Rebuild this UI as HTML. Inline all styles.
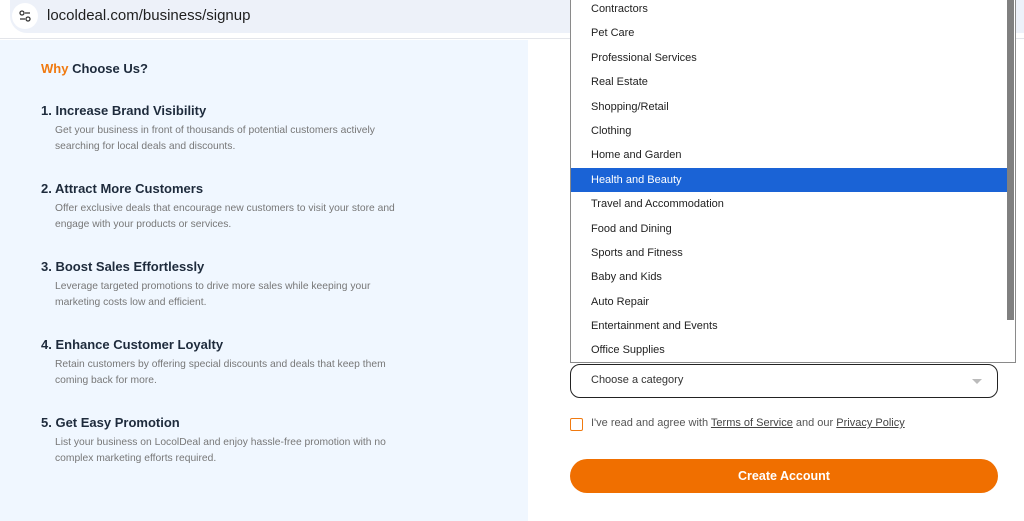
<!DOCTYPE html>
<html><head><style>
*{margin:0;padding:0;box-sizing:border-box}
body{width:1024px;height:521px;overflow:hidden;background:#fff;font-family:"Liberation Sans",sans-serif;position:relative}
.bar{position:absolute;left:0;top:0;width:1024px;height:39px;background:#fff;border-bottom:1px solid #e3e5ea}
.pill{position:absolute;left:10px;top:0;width:1030px;height:33px;background:#edf1f9;border-radius:0 0 0 17px}
.ic{position:absolute;left:12px;top:3px;width:26px;height:26px;border-radius:13px;background:#fff}
.url{position:absolute;left:47px;top:7px;font-size:15px;color:#1f1f1f}
.left{position:absolute;left:0;top:40px;width:528px;height:481px;background:#f0f7ff}
h2{position:absolute;left:41px;top:61px;font-size:13px;font-weight:bold;color:#1e2b3c}
h2 span{color:#f07a10}
.it{position:absolute;left:41px}
.it b{display:block;font-size:13px;color:#1e2b3c;margin-bottom:5px}
.it p{margin-left:14px;font-size:10.3px;line-height:16px;color:#777;width:350px}
.list{position:absolute;left:570px;top:0;width:446px;height:363px;background:#fff;border:1px solid #8a8a8a;border-top:none;overflow:hidden}
.list div{height:24.4px;line-height:24.4px;padding-left:20px;font-size:11px;color:#222;width:436px}
.list .sel{background:#1a63d6;color:#fff}
.thumb{position:absolute;left:1007px;top:0;width:7px;height:320px;background:#808080}
.selbox{position:absolute;left:570px;top:364px;width:428px;height:34px;border:1.5px solid #222;border-radius:10px;font-size:11px;color:#333;padding:9px 0 0 20px}
.arr{position:absolute;right:15px;top:14px;border-left:5px solid transparent;border-right:5px solid transparent;border-top:5px solid #bbb}
.cb{position:absolute;left:570px;top:418px;width:13px;height:13px;border:1.5px solid #f07a10;border-radius:2px}
.agree{position:absolute;left:591px;top:417px;font-size:11px;color:#555}
.agree u{color:#444}
.btn{position:absolute;left:570px;top:459px;width:428px;height:34px;background:#f06f00;border-radius:17px;color:#fff;font-size:12.5px;font-weight:bold;text-align:center;line-height:34px}
</style></head><body>
<div class="bar"><div class="pill"></div><div class="ic"><svg width="26" height="26"><circle cx="10" cy="10" r="2" fill="none" stroke="#333" stroke-width="1.3"/><path d="M13 10h5M8 16h5" stroke="#333" stroke-width="1.3"/><circle cx="16" cy="16" r="2" fill="none" stroke="#333" stroke-width="1.3"/></svg></div><div class="url">locoldeal.com/business/signup</div></div>
<div class="left"></div>
<h2><span>Why</span> Choose Us?</h2>
<div class="it" style="top:103px"><b>1. Increase Brand Visibility</b><p>Get your business in front of thousands of potential customers actively searching for local deals and discounts.</p></div>
<div class="it" style="top:181px"><b>2. Attract More Customers</b><p>Offer exclusive deals that encourage new customers to visit your store and engage with your products or services.</p></div>
<div class="it" style="top:259px"><b>3. Boost Sales Effortlessly</b><p>Leverage targeted promotions to drive more sales while keeping your marketing costs low and efficient.</p></div>
<div class="it" style="top:337px"><b>4. Enhance Customer Loyalty</b><p>Retain customers by offering special discounts and deals that keep them coming back for more.</p></div>
<div class="it" style="top:415px"><b>5. Get Easy Promotion</b><p>List your business on LocolDeal and enjoy hassle-free promotion with no complex marketing efforts required.</p></div>
<div class="list"><div style="margin-top:-3px">Contractors</div><div>Pet Care</div><div>Professional Services</div><div>Real Estate</div><div>Shopping/Retail</div><div>Clothing</div><div>Home and Garden</div><div class="sel">Health and Beauty</div><div>Travel and Accommodation</div><div>Food and Dining</div><div>Sports and Fitness</div><div>Baby and Kids</div><div>Auto Repair</div><div>Entertainment and Events</div><div>Office Supplies</div></div>
<div class="thumb"></div>
<div class="selbox">Choose a category<span class="arr"></span></div>
<div class="cb"></div>
<div class="agree">I've read and agree with <u>Terms of Service</u> and our <u>Privacy Policy</u></div>
<div class="btn">Create Account</div>
</body></html>
